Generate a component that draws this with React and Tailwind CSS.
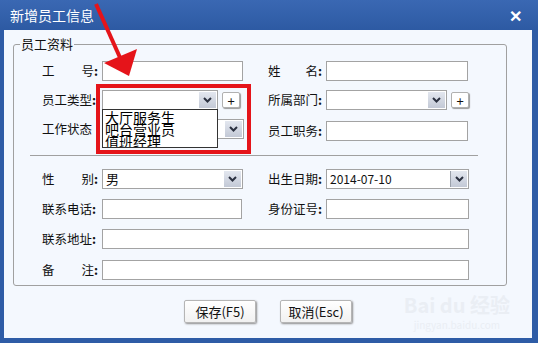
import React from "react";

const font = { fontFamily: '"Noto Sans CJK SC", "Liberation Sans", sans-serif' };

function Label({ chars, colon = true, w = "w-[56px]" }) {
  const last = chars.length - 1;
  return (
    <div className={`${w} flex items-center justify-between whitespace-nowrap text-[12.5px] leading-none text-[#111] shrink-0`}>
      {chars.map((c, i) => (
        <span key={i}>
          {c}
          {i === last && colon ? <span className="font-bold">:</span> : null}
        </span>
      ))}
    </div>
  );
}

function Input({ w = "w-[141px]", value = "" }) {
  return (
    <div className={`${w} h-[20px] border border-[#a3a3a3] bg-white text-[13px] leading-[18px] px-[3px] text-[#111]`}>
      {value}
    </div>
  );
}

function Arrow({ sep = false }) {
  return (
    <div className={`w-[17px] h-[16px] m-[1px] flex items-center justify-center bg-gradient-to-b from-[#e3e7ef] to-[#c3c9d6] ${sep ? "border-l border-[#9aa0aa]" : ""}`}>
      <svg width="9" height="6" viewBox="0 0 9 6">
        <path d="M1 1 L4.5 4.5 L8 1" fill="none" stroke="#2b3140" strokeWidth="2" />
      </svg>
    </div>
  );
}

function Select({ w = "w-[141px]", value = "", mono = false }) {
  return (
    <div className={`${w} h-[20px] border border-[#a3a3a3] bg-white flex items-center justify-between`}>
      <span className={`px-[3px] text-[#111] ${mono ? "text-[12px]" : "text-[13px]"}`}>{value}</span>
      <Arrow sep={mono} />
    </div>
  );
}

function Plus() {
  return (
    <div className="w-[18px] h-[16px] bg-white border border-[#b0b0b0] rounded-[2px] shadow-[1px_1px_1px_#9a9a9a] flex items-center justify-center text-[13px] leading-none text-[#111]">
      +
    </div>
  );
}

function Button({ children }) {
  return (
    <div className="w-[72px] h-[23px] bg-gradient-to-b from-white to-[#f1f1f1] border border-[#b5b5b5] rounded-[2px] shadow-[1px_1px_2px_#8e8e8e] flex items-center justify-center text-[13px] text-[#111]">
      {children}
    </div>
  );
}

export default function App() {
  return (
    <div className="relative w-[538px] h-[343px] bg-[#2e5ca6] overflow-hidden" style={font}>
      {/* title bar */}
      <div className="h-[30px] flex items-center justify-between pl-[10px] pr-[16px] bg-gradient-to-b from-[#3a68b3] to-[#2d5aa3]">
        <span className="text-white text-[14px]">新增员工信息</span>
        <span className="text-white text-[16px] font-bold leading-none">✕</span>
      </div>

      {/* body */}
      <div className="relative ml-[4px] mr-[6px] h-[308px] bg-[#f4f8fe] pl-[9px] pt-[14px]">
        <div className="relative w-[494px] h-[242px] border border-[#a0a0a0] rounded-[3px] pl-[28px] pt-[16px]">
          <span className="absolute left-[6px] -top-[9px] px-[1px] bg-[#f4f8fe] text-[13px] leading-[16px] text-[#111]">员工资料</span>

          <div className="flex flex-col">
            {/* row 1 */}
            <div className="flex items-center h-[20px]">
              <div className="w-[226px] flex items-center gap-[4px]">
                <Label chars={["工", "号"]} />
                <Input />
              </div>
              <div className="flex items-center gap-[4px]">
                <Label chars={["姓", "名"]} w="w-[54px]" />
                <Input w="w-[142px]" />
              </div>
            </div>

            {/* row 2 */}
            <div className="flex items-center h-[20px] mt-[9px]">
              <div className="w-[226px] flex items-center gap-[4px]">
                <Label chars={["员工类型"]} />
                <Select w="w-[116px]" />
                <Plus />
              </div>
              <div className="flex items-center gap-[4px]">
                <Label chars={["所属部门"]} w="w-[54px]" />
                <Select w="w-[121px]" />
                <Plus />
              </div>
            </div>

            {/* row 3 */}
            <div className="flex items-center h-[20px] mt-[9px]">
              <div className="w-[226px] flex items-center gap-[4px]">
                <Label chars={["工作状态"]} colon={false} />
                <Select w="w-[142px]" />
              </div>
              <div className="flex items-center gap-[4px] mt-[4px]">
                <Label chars={["员工职务"]} w="w-[54px]" />
                <Input w="w-[142px]" />
              </div>
            </div>

            <div className="h-px w-[448px] bg-[#a0a0a0] -ml-[12px] mt-[16px]" />

            {/* row 4 */}
            <div className="flex items-center h-[20px] mt-[13px]">
              <div className="w-[226px] flex items-center gap-[4px]">
                <Label chars={["性", "别"]} />
                <Select w="w-[141px]" value="男" />
              </div>
              <div className="flex items-center gap-[4px]">
                <Label chars={["出生日期"]} w="w-[54px]" />
                <Select w="w-[143px]" value="2014-07-10" mono />
              </div>
            </div>

            {/* row 5 */}
            <div className="flex items-center h-[20px] mt-[10px]">
              <div className="w-[226px] flex items-center gap-[4px]">
                <Label chars={["联系电话"]} />
                <Input w="w-[140px]" />
              </div>
              <div className="flex items-center gap-[4px]">
                <Label chars={["身份证号"]} w="w-[54px]" />
                <Input w="w-[143px]" />
              </div>
            </div>

            {/* row 6 */}
            <div className="flex items-center gap-[4px] h-[20px] mt-[10px]">
              <Label chars={["联系地址"]} />
              <Input w="w-[367px]" />
            </div>

            {/* row 7 */}
            <div className="flex items-center gap-[4px] h-[20px] mt-[11px]">
              <Label chars={["备", "注"]} />
              <Input w="w-[367px]" />
            </div>
          </div>
        </div>

        {/* buttons */}
        <div className="flex justify-center gap-[24px] mt-[14px] pr-[9px]">
          <Button>保存(F5)</Button>
          <Button>取消(Esc)</Button>
        </div>

        {/* watermark */}
        <div className="absolute right-[22px] bottom-[8px] flex flex-col items-center text-[#eaeef4] leading-none">
          <span className="text-[20px] font-bold">Bai du 经验</span>
          <span className="text-[10px] mt-[5px]">jingyan.baidu.com</span>
        </div>
      </div>

      {/* dropdown list opened under 员工类型 */}
      <div className="absolute left-[102px] top-[109px] w-[116px] h-[39px] bg-white border border-[#333] flex flex-col pl-[2px] text-[14px] leading-[12px] text-black overflow-hidden">
        <span className="mt-[1px]">大厅服务生</span>
        <span>吧台营业员</span>
        <span>值班经理</span>
      </div>

      {/* red highlight box */}
      <div className="absolute left-[96px] top-[84px] w-[155px] h-[70px] border-[4px] border-[#e5141a]" />

      {/* red arrow */}
      <svg className="absolute left-0 top-0" width="538" height="343" viewBox="0 0 538 343">
        <line x1="96" y1="4" x2="122" y2="62" stroke="#e5141a" strokeWidth="4" />
        <polygon points="129,76 104,63 137,49" fill="#e5141a" />
      </svg>
    </div>
  );
}
